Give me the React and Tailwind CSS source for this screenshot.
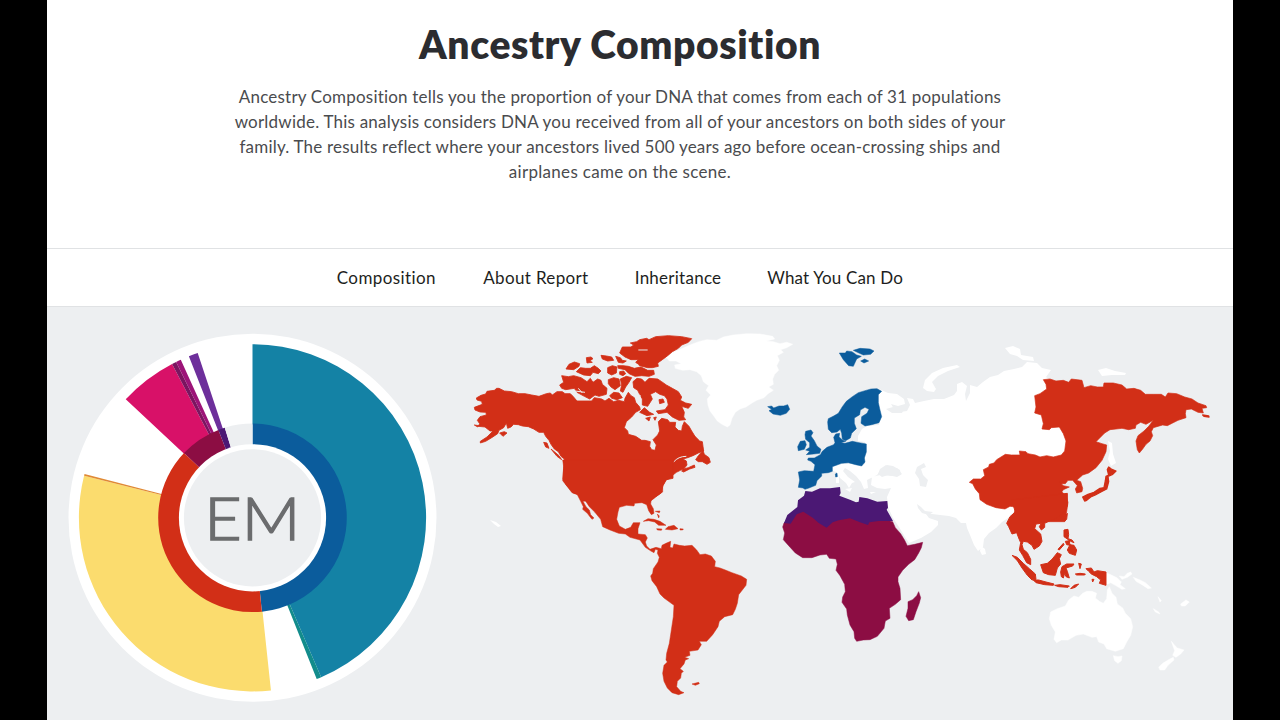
const BLUE = '#0b5c9c';
const RED = '#d22f17';
const MAROON = '#8c0d43';
const VIOLET = '#4b1874';
const SEA = '#edeff1';

const CX = 252.5;
const CY = 517.8;

function point(r, deg) {
  const a = (deg * Math.PI) / 180;
  return `${(CX + r * Math.sin(a)).toFixed(2)} ${(CY - r * Math.cos(a)).toFixed(2)}`;
}

function arc(r0, r1, from, to) {
  const large = to - from > 180 ? 1 : 0;
  return `M${point(r1, from)}A${r1} ${r1} 0 ${large} 1 ${point(r1, to)}L${point(r0, to)}A${r0} ${r0} 0 ${large} 0 ${point(r0, from)}Z`;
}

const OUTER = [
  [0, 156.7, '#1482a5'],
  [156.7, 158.3, '#128c8c'],
  [173.9, 284, '#fbdc6e'],
  [284, 284.6, '#e08a35'],
  [313.1, 332.4, '#d81168'],
  [332.4, 333.9, '#7a1560'],
  [333.9, 335.6, '#9c1478'],
  [338.5, 341.6, '#6d2f9b'],
];

const INNER = [
  [0, 174.3, BLUE],
  [174.3, 313.4, RED],
  [313.4, 338.8, MAROON],
  [338.8, 342.9, VIOLET],
  [342.9, 360, SEA],
];

function Donut() {
  return (
    <svg className="shrink-0" width="370" height="370" viewBox="68 333 370 370" role="img">
      <circle cx={CX} cy={CY} r="184" fill="#fff" />
      {OUTER.map(([a, b, c]) => (
        <path key={a} d={arc(93, 173.6, a, b)} fill={c} />
      ))}
      {INNER.map(([a, b, c]) => (
        <path key={a} d={arc(72, 94.3, a, b)} fill={c} />
      ))}
      <circle cx={CX} cy={CY} r="73.6" fill="#fff" />
      <circle cx={CX} cy={CY} r="68.6" fill={SEA} />
      <text
        x="252.3"
        y="540"
        textAnchor="middle"
        fill="#6b6c6e"
        stroke="#6b6c6e"
        strokeWidth="1.5"
        fontSize="60"
        textLength="96"
        lengthAdjust="spacingAndGlyphs"
        className="font-['Lato'] font-light"
      >
        EM
      </text>
    </svg>
  );
}

function Region({ x, y, fill, edge = 1.5, children }) {
  return (
    <g transform={`translate(${x} ${y}) scale(0.33333)`} fill={fill} stroke={fill} strokeWidth={edge}>
      {children}
    </g>
  );
}

function WorldMap() {
  return (
    <svg className="shrink-0" width="760" height="380" viewBox="465 325 760 380" role="img" strokeLinejoin="round">
      {/* Greenland */}
      <Region x={640} y={325} fill="#fff">
        <path d="M78 96L100 82L128 70L150 60L176 50L200 44L230 46L250 36L280 30L320 26L360 27L398 34L404 42L378 48L400 50L420 56L440 52L458 58L440 68L422 74L430 82L412 92L418 106L410 122L416 136L404 148L398 162L400 178L386 186L400 196L384 206L372 218L350 226L336 234L318 246L300 252L286 262L276 280L270 300L262 306L246 298L232 288L222 274L210 258L204 240L202 222L212 210L198 196L206 182L190 170L184 152L170 140L150 134L128 136L106 130L104 120L124 116L108 108L88 108Z" />
      </Region>

      {/* Western and central Eurasia */}
      <path
        fill="#fff"
        d="M879 389L888 393L897 394L904 399L905 404L898 406L891 404L894 409L900 412L907 411L910 405L907 398L913 399L915 403L924 401L934 399L944 399L954 395L957 391L957 384L962 382L967 386L965 394L966 401L970 393L970 385L977 387L983 382L990 377L998 375L1004 371L1014 369L1022 367L1027 362L1037 363L1042 368L1051 370L1046 377L1060 390L1075 425L1070 460L1060 490L1016 510L1008 518L1002 522L996 528L989 533L984 539L983 547L978 551L974 545L970 535L967 528L966 523L961 523L956 518L949 516L940 515L932 514L926 514L929 518L938 521L938 525L931 532L921 538L909 543L905 537L899 527L893 518L888 507L887 497L891 488L885 489L877 488L871 485L872 477L880 475L893 476L901 475L900 470L893 466L887 465L881 470L877 475L871 478L867 480L868 488L864 489L861 482L856 476L850 471L845 468L843 471L848 477L855 482L852 483L849 488L846 483L840 478L836 472L831 470L828 472L829 464L865 464L865 442L858 441L858 436L862 429L867 426L879 425L881 415L878 400Z"
      />
      <g fill={SEA}>
        <path d="M878 474L880 469L886 465L890 468L897 468L902 474L897 477L888 475L882 477Z" />
        <path d="M917 467L924 463L926 467L921 469L923 475L928 480L926 487L920 486L919 479L915 473Z" />
        <path d="M917 504L921 507L925 511L933 512L929 515L922 513L918 508Z" />
        <path d="M886 409L893 407L898 410L904 409L902 413L892 413Z" />
      </g>
      <g fill="#fff">
        <path d="M923 388L925 380L932 373L943 368L957 365L960 367L948 371L938 376L932 382L936 389L934 392L927 391Z" />
        <path d="M1005 348L1013 346L1020 349L1021 355L1033 357L1034 361L1023 360L1017 356L1010 354Z" />
        <path d="M1098 370L1106 368L1115 371L1126 373L1125 375L1112 375L1102 376Z" />
        <path d="M1108 441L1112 443L1113 454L1116 463L1111 466L1108 459L1110 451Z" />
        <path d="M981 546L985 549L986 554L982 555L980 551Z" />
        <path d="M490 520L496 522L501 526L498 527L494 524Z" />
        <path d="M845 489L852 488L850 492ZM836 477L839 476L839 483L836 483ZM870 492L876 492L871 494Z" />
      </g>

      {/* Australia and the Pacific */}
      <Region x={940} y={430} fill="#fff">
        <path d="M332 546L352 536L376 528L386 510L402 498L416 502L428 490L440 484L456 484L470 490L466 504L478 514L490 520L500 506L502 480L508 470L516 490L528 502L532 522L548 534L556 550L572 566L578 590L572 616L560 636L550 656L526 664L500 656L492 642L476 636L470 620L456 622L430 612L408 616L384 630L364 630L350 638L342 628L346 606L334 586L328 566Z" />
        <path d="M520 677L534 680L546 678L544 692L534 700L524 692Z" />
        <path d="M498 428L516 436L532 444L544 456L540 464L556 476L546 478L526 466L512 458L498 464ZM538 438L552 440L562 430L572 426L576 432L562 442L546 448ZM580 442L600 450L616 458L634 474L624 476L606 464L588 454Z" />
        <path d="M694 634L704 646L712 654L732 660L722 672L708 682L698 676L704 662ZM656 712L668 700L688 688L700 682L702 690L684 706L674 720L660 720Z" />
        <path d="M640 536L656 546L660 552L646 546ZM722 522L738 510L748 516L736 528L724 528ZM654 500L664 512L660 516Z" />
      </Region>

      {/* North America */}
      <Region x={465} y={325} fill={RED} edge={2.5}>
        <path d="M95 190L88 196L66 199L62 207L48 211L34 219L36 225L50 229L52 238L28 247L30 255L45 261L63 262L64 270L45 275L37 286L44 296L40 304L60 306L75 318L84 318L66 336L46 349L46 354L62 349L80 338L98 326L102 316L116 308L124 294L128 310L138 306L146 298L160 299L172 303L190 305L206 312L222 322L236 322L242 334L252 346L258 358L268 372L280 380L288 394L298 402L296 430L294 462L304 480L318 496L326 504L340 508L352 528L556 528L562 524L572 516L588 504L594 482L604 464L624 460L624 450L634 442L646 436L656 432L670 428L688 420L690 427L674 432L656 441L650 438L658 430L666 420L664 408L654 402L668 398L684 392L700 384L716 378L714 364L712 350L704 348L690 334L680 318L672 304L658 290L652 304L650 318L640 316L630 306L632 292L614 292L608 284L590 280L580 290L584 318L578 330L564 344L574 360L570 376L560 374L554 364L556 350L540 346L530 346L512 334L490 328L488 318L478 308L484 290L500 276L512 262L526 254L524 246L512 232L508 218L498 212L490 202L480 220L478 230L460 226L446 230L432 220L420 228L410 222L388 218L380 228L360 228L336 228L324 214L316 206L300 206L292 200L276 200L262 210L256 204L244 206L222 214L200 210L180 206L160 206L140 200L118 198L102 190Z" />
        <path d="M496 54L515 50L524 44L545 40L552 44L572 35L610 32L650 35L680 41L670 52L650 60L640 70L622 80L608 92L592 104L578 114L580 124L562 128L548 128L524 122L512 112L520 104L498 104L480 96L464 84L472 66L498 66L506 60Z" />
        <path d="M303 132L312 118L328 111L344 116L342 124L326 134ZM364 98L378 96L384 101L374 108L382 112L366 114ZM334 140L346 128L362 130L376 130L388 122L400 130L408 138L400 146L384 142L376 152L356 150ZM408 91L424 93L440 96L446 106L428 108L412 102ZM452 94L466 98L472 106L484 108L474 114L460 112ZM428 128L442 122L456 126L454 144L440 150L428 144ZM458 122L474 122L490 124L508 130L528 126L548 136L566 136L568 148L552 154L530 152L510 154L492 146L480 134L460 130ZM464 140L476 138L482 146L474 152L464 148Z" />
        <path d="M290 152L310 155L326 152L348 158L366 170L376 160L384 172L398 162L408 166L412 178L426 190L424 208L402 214L390 210L374 222L358 214L336 202L328 190L302 194L290 190L284 180L296 172ZM430 164L446 158L462 162L466 182L450 194L438 186L430 176ZM434 212L446 202L462 204L472 218L456 224L440 220ZM466 162L484 154L500 158L492 172L482 186L474 202L466 198L470 180Z" />
        <path d="M504 170L516 160L530 162L540 172L552 160L578 162L590 170L604 180L622 190L640 200L650 216L646 226L662 234L680 238L670 250L650 244L658 262L656 276L662 284L642 286L622 276L606 262L580 266L574 258L600 254L610 240L606 222L598 212L584 208L572 200L556 208L562 222L548 244L532 240L532 222L524 208L518 196L506 188ZM582 224L594 222L598 232L584 236ZM524 262L538 248L554 262L566 268L546 272ZM542 280L556 276L552 288ZM566 278L574 276L570 286Z" />
        <path d="M692 404L700 392L714 376L718 388L732 398L736 412L726 418L712 410L700 410ZM104 324L118 320L126 324L114 334ZM236 352L246 354L252 370L242 366ZM28 300L42 302L38 306ZM258 372L270 382L282 392L290 404L276 394Z" />
        <path d="M626 411Q640 394 664 394M520 75H548M486 108L520 120M490 186L528 214M340 190L352 204M330 198L360 202" fill="none" stroke={SEA} strokeWidth="3" />
      </Region>

      {/* Central and South America */}
      <Region x={550} y={460} fill={RED}>
        <path d="M38 0L41 20L38 62L52 80L66 98L82 104L92 124L100 140L98 148L112 160L118 168L126 178L132 174L122 164L118 150L108 140L98 122L106 122L118 140L134 156L152 178L158 200L180 210L206 220L226 222L240 232L270 240L286 262L304 274L312 278L316 268L324 270L322 280L328 292L324 306L310 326L308 340L302 348L306 362L320 380L330 402L342 414L372 436L370 470L364 510L358 550L350 580L348 600L352 606L342 616L338 640L342 664L352 684L366 698L386 704L402 698L392 694L380 680L382 664L392 654L394 640L400 634L390 626L402 612L406 600L416 596L404 592L420 586L418 574L444 570L454 554L448 544L470 544L488 524L504 500L508 484L524 470L548 464L556 448L562 430L566 404L588 376L590 358L574 348L546 338L526 330L510 324L494 320L496 304L484 288L466 282L450 284L440 270L426 256L404 258L388 256L372 252L368 264L360 262L362 244L348 250L336 256L334 266L318 262L300 268L290 258L286 246L292 234L286 224L264 222L264 206L270 188L250 188L242 202L226 208L208 198L200 178L204 156L208 142L230 136L252 138L254 130L276 128L290 134L296 152L304 164L312 160L310 146L302 132L304 118L326 104L338 96L338 78L348 60L360 55L370 38L370 0Z" />
        <path d="M280 184L294 176L312 178L330 184L348 196L326 196L314 186L296 182ZM354 200L372 196L384 206L366 210L346 208ZM320 206L336 207L334 211L322 210ZM390 206L400 207L398 210L390 210ZM316 154L330 153L328 158ZM322 162L328 168L326 174ZM426 672L446 667L448 671L436 676Z" />
      </Region>

      {/* Northern and western Europe */}
      <Region x={765} y={370} fill={BLUE}>
        <path d="M188 156L190 146L206 138L220 130L232 110L244 94L262 80L280 68L300 62L318 57L336 56L350 64L340 74L340 98L344 116L350 140L342 158L320 164L300 168L288 160L290 140L306 130L312 118L300 112L286 120L284 134L268 144L268 160L274 176L260 190L256 204L242 212L232 208L230 190L226 178L216 186L200 188L190 178Z" />
        <path d="M100 306L118 302L146 304L150 284L138 274L128 270L130 264L148 264L166 254L172 244L186 232L206 224L210 218L206 202L212 192L224 190L222 200L232 210L242 214L228 218L240 220L262 214L282 218L304 222L304 246L298 264L300 276L290 288L272 284L250 278L230 280L202 290L202 304L190 308L170 310L170 318L156 332L152 346L132 354L120 358L114 354L100 352L104 330Z" />
        <path d="M122 184L138 180L144 188L138 198L148 212L156 228L168 238L164 250L146 252L124 254L134 244L122 240L134 232L134 218L122 208L120 194ZM98 230L106 214L120 212L124 224L118 238L100 242ZM8 110L20 108L26 114L42 108L56 108L68 104L74 118L64 130L46 136L24 132L12 122L20 118ZM211 312L216 309L217 320L212 321Z" />
      </Region>
      <Region x={640} y={325} fill={BLUE}>
        <path d="M598 84L616 84L620 78L636 80L650 90L664 94L650 102L640 124L626 122L610 104ZM640 76L660 70L690 72L702 78L692 88L670 90L652 82ZM662 108L674 102L686 108L672 114Z" />
      </Region>

      {/* Africa */}
      <Region x={770} y={475} fill={MAROON}>
        <path d="M42 144L60 130L95 105L170 130L230 118L290 124L330 130L368 140L376 158L392 176L404 196L412 212L434 208L458 202L454 218L446 234L434 254L416 268L398 286L384 306L384 320L390 340L392 374L376 388L358 400L360 430L346 438L342 460L322 484L300 494L280 495L260 499L254 490L252 470L240 450L232 420L230 402L216 382L218 366L226 350L224 328L210 302L198 286L202 268L198 252L178 250L170 238L150 240L126 248L98 248L76 234L56 212L40 194L44 174L38 156Z" />
        <path d="M446 350L452 368L448 384L438 410L430 434L416 437L408 424L414 400L414 380L428 374L440 362Z" />
        <path fill={VIOLET} stroke="none" d="M42 144L52 120L82 96L84 76L102 62L106 48L126 50L150 40L180 40L210 36L212 54L208 62L240 74L258 82L266 80L268 66L292 70L322 80L352 78L354 98L350 104L369 138L326 138L298 142L294 150L270 142L240 130L206 136L188 142L170 158L146 144L128 128L100 110L80 118L62 146Z" />
      </Region>

      {/* East Asia */}
      <Region x={890} y={335} fill={RED} edge={2}>
        <path d="M460 134L480 132L498 138L520 136L536 142L544 132L576 136L582 158L602 152L622 156L640 156L642 144L670 144L696 150L710 162L732 160L752 166L766 178L790 178L814 178L826 186L834 174L860 176L884 186L906 192L924 204L948 212L950 218L936 220L940 234L924 232L904 222L888 224L886 236L888 248L864 256L848 264L832 272L818 270L790 278L784 290L788 302L780 318L768 328L758 342L748 354L742 344L738 318L744 302L762 288L776 274L790 256L768 268L752 262L738 270L736 280L716 284L696 280L660 284L644 294L618 320L636 326L650 330L648 350L636 376L618 398L596 414L578 420L560 436L572 440L578 460L576 470L560 474L556 462L562 452L548 436L534 436L526 446L512 446L508 440L522 436L514 446L520 452L538 456L520 464L516 470L530 488L534 502L530 530L524 560L365 560L378 516L360 514L345 522L318 518L290 508L270 494L268 476L256 462L248 446L238 442L250 432L272 432L284 422L280 404L296 396L298 388L312 384L320 374L346 358L364 360L390 360L388 348L408 350L414 356L436 360L450 366L470 362L490 366L514 360L524 348L528 318L520 296L508 276L484 278L478 284L456 282L460 266L454 240L434 234L438 216L434 182L450 176L470 162L468 148Z" />
        <path strokeWidth="4" d="M578 486L594 478L612 472L630 460L642 458L646 438L648 424L656 420L652 404L656 396L664 402L678 408L668 418L654 424L656 440L650 462L634 470L616 480L602 486L590 496L584 498ZM938 240L956 243L957 246L942 244Z" />
      </Region>

      {/* Southeast Asia */}
      <Region x={940} y={430} fill={RED} edge={3}>
        <path d="M215 210L382 190L382 228L368 250L350 264L330 272L314 280L314 292L304 300L298 290L304 280L288 282L284 296L302 312L306 334L298 348L282 358L276 346L262 336L250 334L246 344L250 358L262 368L272 388L272 404L260 398L248 376L238 360L242 338L236 324L230 308L216 312L206 290L200 280L210 260L226 246Z" />
        <path d="M216 376L232 382L250 400L268 416L286 432L288 448L276 450L262 436L246 414L232 392ZM280 450L296 450L318 456L342 462L340 466L314 464L288 458ZM302 404L322 400L336 388L352 368L364 374L358 386L362 402L352 414L346 436L326 434L310 428ZM354 358L370 340L372 344L358 360ZM372 300L384 298L386 314L384 326L396 330L402 338L392 334L372 320ZM376 334L388 332L390 346L380 344ZM390 344L402 346L410 360L406 376L388 370L382 360ZM372 264L382 250L380 268L374 274ZM366 410L380 402L402 402L398 408L378 414L382 424L388 444L378 440L374 430L370 444L364 440L362 426ZM416 400L424 402L420 416ZM406 432L420 430L436 432L434 435L410 435ZM344 466L360 464L388 468L384 472L356 470ZM392 476L402 466L416 462L406 472ZM438 416L454 414L462 426L472 422L498 426L498 466L478 460L482 450L470 440L454 432L446 424ZM456 448L462 448L458 456Z" />
      </Region>
    </svg>
  );
}

const NAV = [
  ['Composition', 'w-[100px] tracking-[0.4px]'],
  ['About Report', 'w-[105px] tracking-[0.35px]'],
  ['Inheritance', 'w-[86px] tracking-[0.25px]'],
  ['What You Can Do', 'w-[136px] tracking-[0.15px]'],
];

export default function App() {
  return (
    <div className="flex h-[720px] w-[1280px] justify-center overflow-hidden bg-black font-['Lato',sans-serif]">
      <main className="flex w-[1186px] flex-col bg-white">
        <header className="flex h-[248px] flex-col items-center pr-10 pt-[20px] text-center">
          <h1 className="whitespace-nowrap text-[39px] font-extrabold leading-[48px] tracking-[0.6px] text-[#2b2c30]">Ancestry Composition</h1>
          <p className="mt-[15.5px] whitespace-nowrap text-[17px] leading-[25.3px] tracking-[0.2px] text-[#4a4b4e]">
            <span className="block">Ancestry Composition tells you the proportion of your DNA that comes from each of 31 populations</span>
            <span className="block tracking-[0.22px]">worldwide. This analysis considers DNA you received from all of your ancestors on both sides of your</span>
            <span className="block">family. The results reflect where your ancestors lived 500 years ago before ocean-crossing ships and</span>
            <span className="block tracking-[0.3px]">airplanes came on the scene.</span>
          </p>
        </header>
        <nav className="flex h-[59px] items-center justify-center gap-[46.5px] border-y border-[#e0e2e4] pr-10 text-[17px] text-[#1d1e21]">
          {NAV.map(([label, cls]) => (
            <a key={label} className={`whitespace-nowrap ${cls}`}>
              {label}
            </a>
          ))}
        </nav>
        <section className="flex flex-1 items-start bg-[#edeff1] pl-[20.5px]">
          <div className="mt-[26px]">
            <Donut />
          </div>
          <div className="ml-[27.5px] mt-[18px]">
            <WorldMap />
          </div>
        </section>
      </main>
    </div>
  );
}
